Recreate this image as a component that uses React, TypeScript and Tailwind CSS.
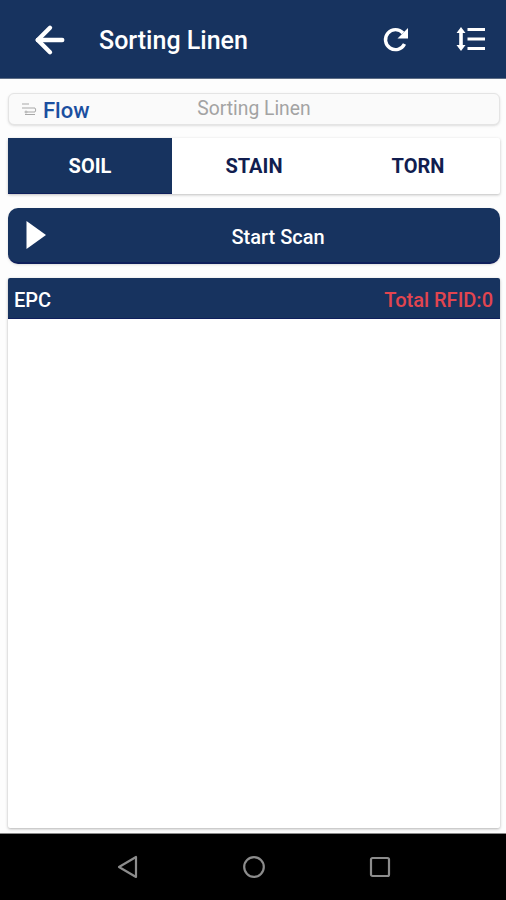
import { ArrowLeft } from 'lucide-react'

const font = { fontFamily: 'Roboto, sans-serif' }

const tabs = ['SOIL', 'STAIN', 'TORN']

const App = () => {
  return (
    <div className="w-[506px] h-[900px] flex flex-col bg-white overflow-hidden" style={font}>
      {/* Toolbar */}
      <div className="h-[79px] shrink-0 bg-[#17335f] border-b border-[#5d6d85] flex items-center pl-[29px] pr-[21px]">
        <ArrowLeft className="w-[42px] h-[42px] text-white mt-[2px]" strokeWidth={2.5} />
        <h1 className="ml-[28px] mt-[4px] text-[25px] font-medium text-white">Sorting Linen</h1>
        <div className="ml-auto flex items-center gap-[47px]">
          <svg viewBox="0 0 26 26" className="w-[26px] h-[26px] text-white mt-[1px]" fill="none" stroke="currentColor" strokeWidth="3.400">
            <path d="M21.500 17 A10 10 0 1 1 20 6" />
            <path d="M25 1 V11.500 H14.500 Z" fill="currentColor" stroke="none" />
          </svg>
          <svg viewBox="0 0 29 24" className="w-[29px] h-[24px] text-white">
            <path d="M5 0 L9.500 6 H6.800 V18 H9.500 L5 24 L0.500 18 H3.200 V6 H0.500 Z" fill="currentColor" />
            <path d="M11.500 2.500 H29 M11.500 12 H29 M11.500 21.500 H29" stroke="currentColor" strokeWidth="3.200" fill="none" />
          </svg>
        </div>
      </div>

      <div className="flex-1 flex flex-col pl-[8px] pr-[6px] pt-[14px] pb-[5px] bg-[#fdfdfd]">
        {/* Flow row */}
        <div className="h-[32px] shrink-0 relative flex items-center bg-[#fafafa] border border-[#e4e4e4] rounded-[6px] shadow-sm pl-[12px]">
          <svg viewBox="0 0 16 14" className="w-[16px] h-[14px] text-[#a8a8a8]" fill="none" stroke="currentColor" strokeWidth="1">
            <path d="M1 2 H8 M1 6 H14 Q15.500 8 14 10 H6 M4 12.500 H14" />
            <circle cx="5" cy="10" r="1" />
          </svg>
          <span className="ml-[6px] mt-[3px] text-[22px] font-medium leading-none text-[#1b4fa0]">Flow</span>
          <span className="absolute left-0 right-0 text-center text-[19.300px] leading-none text-[#a3a3a3]">Sorting Linen</span>
        </div>

        {/* Tabs */}
        <div className="mt-[13px] h-[56px] shrink-0 flex bg-white rounded-[2px] shadow-[0_1px_3px_rgba(0,0,0,0.25)]">
          {tabs.map((tab, index) => (
            <div
              key={tab}
              className={`w-1/3 flex items-center justify-center text-[20px] font-bold ${
                index === 0 ? 'bg-[#17335f] text-white border-b border-[#0f1f5c]' : 'text-[#111d4f]'
              }`}
            >
              {tab}
            </div>
          ))}
        </div>

        {/* Scan button */}
        <div className="mt-[14px] h-[56px] shrink-0 relative flex items-center justify-center bg-[#17335f] rounded-[10px] border-b-2 border-[#0f1f5c] shadow-sm">
          <svg viewBox="0 0 20 30" className="absolute left-[18px] w-[20px] h-[30px] text-white">
            <path d="M0.500 1 L20 15 L0.500 29 Z" fill="currentColor" />
          </svg>
          <span className="ml-[48px] mt-[4px] text-[20px] font-medium text-white">Start Scan</span>
        </div>

        {/* EPC list */}
        <div className="mt-[14px] flex-1 flex flex-col bg-white rounded-[2px] shadow-[0_1px_3px_rgba(0,0,0,0.3)]">
          <div className="h-[41px] shrink-0 flex items-center justify-between bg-[#17335f] border-b border-[#0f1f5c] pl-[6px] pr-[7px] pt-[3px] rounded-t-[2px]">
            <span className="text-[20px] font-medium text-white">EPC</span>
            <span className="text-[20px] font-medium text-[#e2454f]">Total RFID:0</span>
          </div>
        </div>
      </div>

      {/* Navigation bar */}
      <div className="h-[67px] shrink-0 bg-black border-t border-[#8a8a8a] flex items-center pl-[117px] pr-[115px] justify-between">
        <svg viewBox="0 0 22 24" className="w-[22px] h-[24px]" fill="none" stroke="#8c8c8c" strokeWidth="2.200" strokeLinejoin="round">
          <path d="M19 2 V22 L2 12 Z" />
        </svg>
        <svg viewBox="0 0 24 24" className="w-[24px] h-[24px]" fill="none" stroke="#8c8c8c" strokeWidth="2.200">
          <circle cx="12" cy="12" r="9.800" />
        </svg>
        <svg viewBox="0 0 22 22" className="w-[22px] h-[22px]" fill="none" stroke="#8c8c8c" strokeWidth="2.200" strokeLinejoin="round">
          <rect x="2" y="2" width="18" height="18" rx="1.500" />
        </svg>
      </div>
    </div>
  )
}

export default App
